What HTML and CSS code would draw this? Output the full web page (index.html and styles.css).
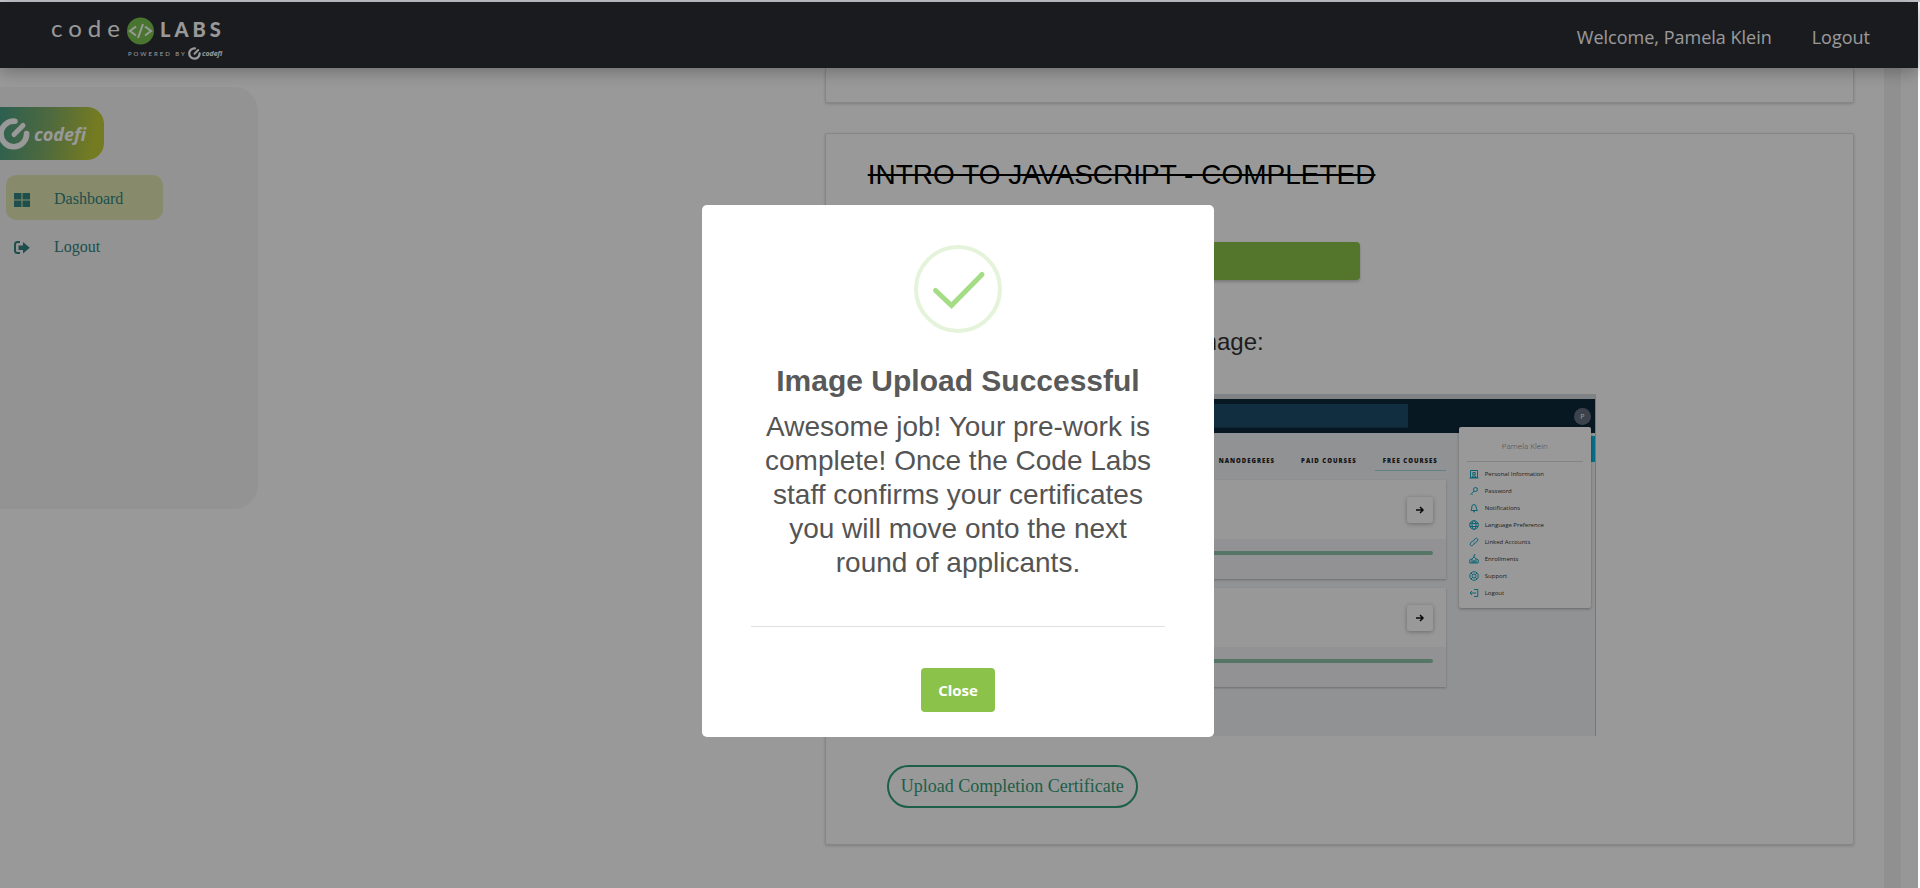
FILE: index.html
```html
<!DOCTYPE html>
<html lang="en">
<head>
<meta charset="utf-8">
<title>Code Labs Dashboard</title>
<link rel="stylesheet" href="styles.css">
</head>
<body>
<svg class="defs" aria-hidden="true">
  <symbol id="codefi-mark" viewBox="0 0 32 32">
    <path d="M17 3.2A12.8 12.8 0 1 0 28.6 15.5" fill="none" stroke="currentColor" stroke-width="5.6" stroke-linecap="round"/>
    <path d="M16 16.5L25 7.5" fill="none" stroke="currentColor" stroke-width="5" stroke-linecap="round"/>
  </symbol>
</svg>
<div class="page">
  <header class="topbar">
    <a href="#" class="brand" aria-label="Code Labs powered by codefi">
      <svg width="180" height="48" viewBox="0 0 180 48">
        <text x="1" y="24" class="brand-code">code</text>
        <circle cx="90.500" cy="18" r="13.5" fill="#7bc350"/>
        <path d="M86 13.500L80 18l6 4.500M95 13.500l6 4.500-6 4.500M93 11l-5 14" fill="none" stroke="#fff" stroke-width="2"/>
        <text x="110" y="24" class="brand-labs">LABS</text>
        <text x="78" y="43" class="brand-powered">POWERED BY</text>
        <use href="#codefi-mark" x="138" y="34" width="13" height="13"/>
        <text x="152" y="43" class="brand-codefi">codefi</text>
      </svg>
    </a>
    <nav class="topnav">
      <span>Welcome, Pamela Klein</span>
      <a href="#">Logout</a>
    </nav>
  </header>
  <div class="layout">
    <aside class="sidebar">
      <div class="side-logo">
        <svg width="32" height="32"><use href="#codefi-mark"/></svg>
        <span>codefi</span>
      </div>
      <nav class="side-nav">
        <a href="#" class="side-link active">
          <svg width="16" height="14" viewBox="0 0 16 14"><path d="M0 0h7.500v6.500H0zM8.500 0H16v6.500H8.500zM0 7.500h7.500V14H0zM8.500 7.500H16V14H8.500z" fill="currentColor"/></svg>
          <span>Dashboard</span>
        </a>
        <a href="#" class="side-link">
          <svg width="16" height="14" viewBox="0 0 16 14"><path d="M6 1H3.500Q1 1 1 3.500v6Q1 12 3.500 12H6" fill="none" stroke="currentColor" stroke-width="2"/><path d="M4.500 4.500H9V1l6.800 5.700L9 12.500V9H4.500z" fill="currentColor"/></svg>
          <span>Logout</span>
        </a>
      </nav>
    </aside>
    <main class="content">
      <section class="card card-tail"></section>
      <section class="card course">
        <h2>INTRO TO JAVASCRIPT - COMPLETED</h2>
        <div class="course-body">
          <button class="course-btn" aria-label="Open course"></button>
          <h3>Your Uploaded Certificate Image:</h3>
          <div class="shot">
            <div class="shot-nav"><div class="shot-search"></div><span class="avatar">P</span></div>
            <div class="shot-main">
              <div class="tabs"><span>NANODEGREES</span><span>PAID COURSES</span><span class="on">FREE COURSES</span></div>
              <div class="tile">
                <div class="tile-top"><span class="arrow"><svg width="10" height="10" viewBox="0 0 10 10"><path d="M1 5h7M5 2l3 3-3 3"/></svg></span></div>
                <div class="tile-foot"><div class="bar"></div></div>
              </div>
              <div class="tile">
                <div class="tile-top"><span class="arrow"><svg width="10" height="10" viewBox="0 0 10 10"><path d="M1 5h7M5 2l3 3-3 3"/></svg></span></div>
                <div class="tile-foot"><div class="bar"></div></div>
              </div>
            </div>
            <div class="accent"></div>
            <div class="menu">
              <div class="menu-name">Pamela Klein</div>
              <ul>
                <li><svg viewBox="0 0 10 10"><path d="M1.500 1.500h7v7h-7zM3.500 8.500V7h3v1.500M3.800 3.500h2.400v2.200H3.800zM.5 9h9"/></svg>Personal Information</li>
                <li><svg viewBox="0 0 10 10"><circle cx="6.500" cy="3.500" r="2"/><path d="M5 5L1.500 8.800M2.500 7.500l1 1M7 3l.3.3"/></svg>Password</li>
                <li><svg viewBox="0 0 10 10"><path d="M2 7.500q.8-1 .8-3.500Q3 1.500 5 1.500T7.200 4Q7.200 6.500 8.500 7.500zM4 8.500q1 1 2 0"/></svg>Notifications</li>
                <li><svg viewBox="0 0 10 10"><circle cx="5" cy="5" r="4.300"/><ellipse cx="5" cy="5" rx="2" ry="4.300"/><path d="M.8 3.500h8.400M.8 6.500h8.400"/></svg>Language Preference</li>
                <li><svg viewBox="0 0 10 10"><path d="M4.500 3.500l1.700-1.800q1.200-1 2.200 0t0 2.200L6.500 6Q5.500 7 4.500 6M5.500 6.500L3.800 8.300q-1.200 1-2.200 0t0-2.200L3.500 4Q4.500 3 5.500 4"/></svg>Linked Accounts</li>
                <li><svg viewBox="0 0 10 10"><path d="M.8 9V5.800L3 4.800 5 3l2 1.800 2.200 1V9zM5 3V.8h1.500M4.200 9V6.800h1.600V9M3 5v4M7 5v4"/></svg>Enrollments</li>
                <li><svg viewBox="0 0 10 10"><circle cx="5" cy="5" r="4.300"/><circle cx="5" cy="5" r="2"/><path d="M2 2l1.500 1.500M8 2L6.500 3.500M2 8l1.500-1.500M8 8L6.500 6.500"/></svg>Support</li>
                <li><svg viewBox="0 0 10 10"><path d="M5 1.500h3.800v7H5M7 5H1M3 3L1 5l2 2"/></svg>Logout</li>
              </ul>
            </div>
          </div>
          <button class="upload-btn">Upload Completion Certificate</button>
        </div>
      </section>
    </main>
    <div class="track"></div>
    <div class="track-outer"></div>
  </div>
</div>
<div class="overlay">
  <div class="modal" role="dialog" aria-labelledby="modal-title">
    <svg class="check" width="88" height="88" viewBox="0 0 88 88" fill="none">
      <circle cx="44" cy="44" r="42" stroke="#e4f3da" stroke-width="4"/>
      <path d="M21.500 45.500L37.500 60.500L68 29.500" stroke="#a5dc86" stroke-width="5" stroke-linecap="round"/>
    </svg>
    <h1 id="modal-title">Image Upload Successful</h1>
    <p>Awesome job! Your pre-work is complete! Once the Code Labs staff confirms your certificates you will move onto the next round of applicants.</p>
    <hr>
    <button class="close-btn">Close</button>
  </div>
</div>
</body>
</html>
```
FILE: styles.css
```css
* { box-sizing: border-box; }
body {
  margin: 0;
  padding: 2px 2px 0 0;
  height: 100vh;
  overflow: hidden;
  background: #fff;
  font-family: "Liberation Sans", Arial, sans-serif;
}
body::before {
  content: "";
  position: absolute;
  top: 0;
  left: 0;
  right: 0;
  height: 2px;
  background: #c6cad0;
}
h1, h2, h3, p, ul { margin: 0; padding: 0; font-weight: 400; }
a { color: inherit; text-decoration: none; }
button { font: inherit; cursor: pointer; }
.defs { position: absolute; width: 0; height: 0; }

.page { display: flex; flex-direction: column; height: 100%; }
.topbar {
  position: relative;
  z-index: 1;
  display: flex;
  flex: none;
  align-items: center;
  justify-content: space-between;
  height: 66px;
  padding: 0 48px 0 50px;
  background: #2b2d34;
  color: #fff;
  box-shadow: 0 3px 16px rgba(0, 0, 0, .3);
}
.brand { display: flex; padding-top: 4px; }
.brand text { fill: #fff; }
.brand-code { font: 400 24px Lato, sans-serif; letter-spacing: 6px; }
.brand-labs { font: 900 20px Lato, sans-serif; letter-spacing: 4px; }
.brand-powered { font: 400 6px Lato, sans-serif; letter-spacing: 2px; }
.brand-codefi { font: italic 700 7px "Open Sans", sans-serif; }
.topnav { display: flex; gap: 40px; padding-top: 4px; font: 400 18px "Open Sans", sans-serif; }

.layout {
  display: grid;
  flex: 1;
  min-height: 0;
  grid-template-columns: 43% 1fr 17px 17px;
}
.track { background: #f1f1f1; }
.track-outer { background: #fcfcfc; }
.sidebar {
  justify-self: start;
  align-self: start;
  width: 258px;
  height: 422px;
  margin-top: 19px;
  padding-top: 20px;
  border-radius: 0 24px 24px 0;
  background: #f6f6f6;
}
.side-logo {
  display: flex;
  align-items: center;
  gap: 4px;
  width: 104px;
  height: 53px;
  margin-bottom: 15px;
  border-radius: 0 17px 17px 0;
  background: linear-gradient(100deg, #4a9f86 0%, #82b06a 45%, #c2cd38 88%);
  color: #fff;
  font: italic 700 18px "Open Sans", sans-serif;
}
.side-logo svg { flex: none; margin-left: -2px; }
.side-nav { display: flex; flex-direction: column; gap: 3px; padding-left: 6px; }
.side-link {
  display: flex;
  align-items: center;
  gap: 24px;
  width: 157px;
  height: 45px;
  padding: 2px 8px 0;
  border-radius: 10px;
  color: #328480;
  font: 400 16px "Liberation Serif", "Times New Roman", serif;
}
.side-link svg { margin-top: 2px; }
.side-link.active { background: #e2e8b3; }

.content { display: flex; flex-direction: column; gap: 30px; padding-right: 30px; }
.card {
  border: 1px solid #e0e0e0;
  border-radius: 2px;
  background: #fff;
  box-shadow: 0 1px 3px rgba(0, 0, 0, .18);
}
.card-tail { flex: none; height: 35px; border-top: 0; }
.course { padding: 24px 42px 36px; }
.course h2 { color: #000; font-size: 28px; line-height: 34px; text-decoration: line-through; }
.course-body { display: flex; flex-direction: column; align-items: flex-start; padding: 50px 0 0 19px; }
.course-btn {
  width: 473px;
  max-width: 100%;
  height: 38px;
  border: 0;
  border-radius: 4px;
  background: #8bc34a;
  box-shadow: 0 2px 3px rgba(0, 0, 0, .2);
}
.course h3 {
  width: 377px;
  margin: 48px 0 38px;
  color: #333;
  font-size: 24px;
  line-height: 28px;
  text-align: right;
}
.upload-btn {
  height: 43px;
  margin-top: 29px;
  padding: 0 12px;
  border: 2px solid #319e7a;
  border-radius: 22px;
  background: #fff;
  color: #319e7a;
  font: 400 18px "Liberation Serif", "Times New Roman", serif;
}

.shot {
  position: relative;
  width: 709px;
  height: 342px;
  border-top: 5px solid #d5dadf;
  border-right: 1px solid #c5c7cd;
  background: #f2f3f7;
  font-family: "Open Sans", sans-serif;
}
.shot-nav {
  display: flex;
  align-items: center;
  justify-content: space-between;
  height: 34px;
  padding-right: 4px;
  background: #0d2839;
}
.shot-search { width: 521px; height: 24px; background: #1c4e6b; border-bottom: 1px solid #163e56; }
.avatar {
  width: 17px;
  height: 17px;
  border-radius: 50%;
  background: #67707f;
  color: #fff;
  font-size: 7px;
  line-height: 17px;
  text-align: center;
}
.shot-main { display: flex; flex-direction: column; gap: 9px; margin-right: 149px; }
.tabs {
  display: flex;
  justify-content: flex-end;
  gap: 10px;
  height: 38px;
  padding-top: 8px;
  color: #222;
  font-size: 6px;
  font-weight: 800;
  letter-spacing: 1px;
}
.tabs span { height: 30px; padding: 0 8px; line-height: 40px; }
.tabs .on { border-bottom: 1px solid #9fd6dd; }
.tile { background: #fdfdfe; box-shadow: 0 1px 2px rgba(0, 0, 0, .25); }
.tile-top { display: flex; align-items: center; justify-content: flex-end; height: 59px; padding: 0 13px; }
.arrow {
  display: flex;
  align-items: center;
  justify-content: center;
  width: 26px;
  height: 26px;
  border-radius: 3px;
  background: #fff;
  box-shadow: 0 1px 4px rgba(0, 0, 0, .3);
}
.arrow path { fill: none; stroke: #111; stroke-width: 1.500; }
.tile-foot { height: 40px; padding: 12px 13px 0 0; background: #f3f4f7; }
.bar { height: 4px; border-radius: 0 2px 2px 0; background: #8ec3ac; }
.accent { position: absolute; top: 37px; right: 0; width: 4px; height: 26px; background: #0db5df; }
.menu {
  position: absolute;
  top: 28px;
  right: 4px;
  width: 132px;
  height: 181px;
  padding: 0 8px;
  border-radius: 2px;
  background: #fff;
  box-shadow: 0 1px 3px rgba(0, 0, 0, .3);
}
.menu-name {
  height: 35px;
  margin-bottom: 3px;
  border-bottom: 1px solid #dcdcdc;
  color: #777;
  font-size: 8px;
  font-weight: 300;
  line-height: 38px;
  text-align: center;
}
.menu ul { list-style: none; }
.menu li {
  display: flex;
  align-items: center;
  gap: 6px;
  height: 17px;
  padding-left: 2px;
  color: #333;
  font-size: 6px;
}
.menu svg { width: 10px; height: 10px; fill: none; stroke: #18a9c4; }

.overlay {
  position: fixed;
  inset: 2px 2px 0 0;
  z-index: 10;
  display: flex;
  align-items: center;
  justify-content: center;
  padding: 51px 2px 0 0;
  background: rgba(0, 0, 0, .4);
}
.modal {
  display: flex;
  flex-direction: column;
  align-items: center;
  width: 512px;
  padding: 40px 49px 25px;
  border-radius: 5px;
  background: #fff;
  text-align: center;
}
.modal h1 {
  margin-top: 28px;
  color: #595959;
  font-size: 30px;
  font-weight: 700;
  line-height: 40px;
}
.modal p { margin-top: 9px; color: #545454; font-size: 28px; line-height: 34px; }
.modal hr { width: 100%; height: 1px; margin: 46px 0 41px; border: 0; background: #e0e0e0; }
.close-btn {
  height: 44px;
  padding: 0 17px;
  border: 0;
  border-radius: 4px;
  background: #8bc34a;
  color: #fff;
  font: 700 15px "Open Sans", sans-serif;
}
```
